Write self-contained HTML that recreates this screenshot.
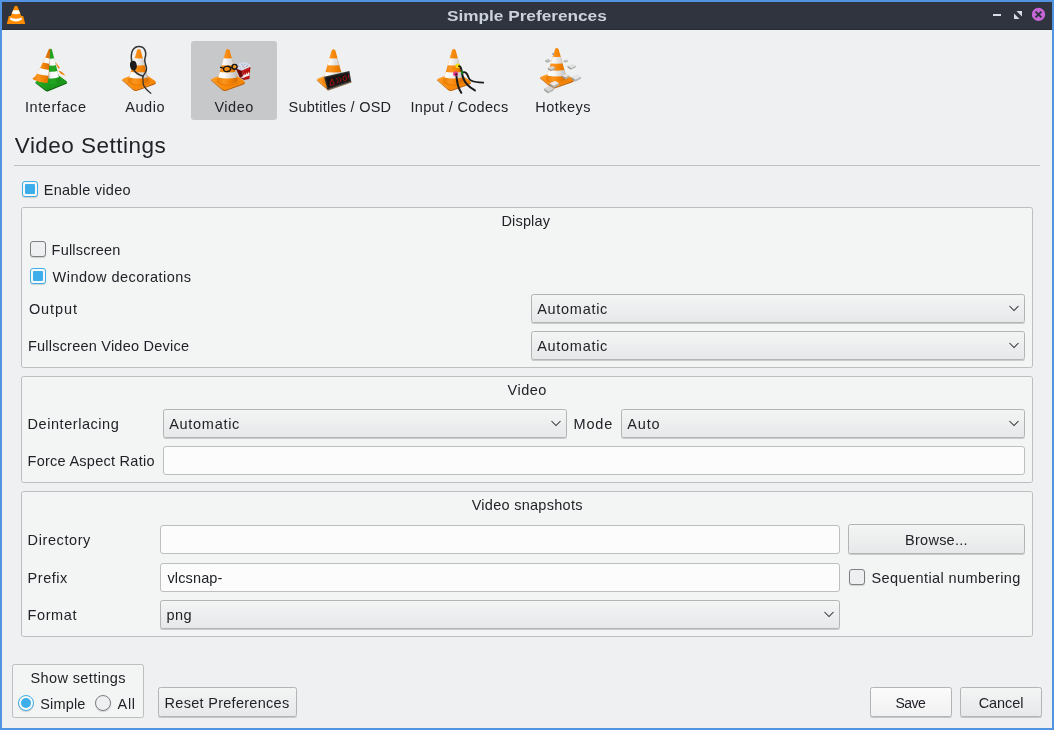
<!DOCTYPE html>
<html>
<head>
<meta charset="utf-8">
<title>Simple Preferences</title>
<style>
html,body{margin:0;padding:0;}
body{width:1054px;height:730px;background:#5294e2;position:relative;overflow:hidden;font-family:"Liberation Sans",sans-serif;}
.abs{position:absolute;box-sizing:border-box;}
#titlebar{left:2px;top:2px;width:1050px;height:28px;background:#2f343f;border-bottom:1px solid #272b34;}
#content{left:2px;top:30px;width:1050px;height:698px;background:#eff0f1;}
.t{position:absolute;white-space:nowrap;line-height:1;}
#title{will-change:transform;position:absolute;left:446.5px;top:9px;font-size:14px;font-weight:700;color:#ccd2dc;white-space:nowrap;line-height:1;transform-origin:0 0;transform:scaleX(1.229);}
.sel{left:191px;top:41px;width:86px;height:79px;background:#c7c8c9;border-radius:3px;}
.hr{left:14px;top:165px;width:1026px;height:1px;background:#bfc1c3;}
.grp{border:1px solid #bcbebf;border-radius:2.5px;background:#f3f4f4;}
.combo,.btn{border:1px solid #b2b4b6;border-radius:2.5px;background:linear-gradient(#f3f4f4,#e7e8e9);box-shadow:0 1px 0.5px rgba(0,0,0,0.17);}
.btn.def{background:linear-gradient(#fbfbfb,#f1f1f2);}
.edit{border:1px solid #bcbebf;border-radius:3px;background:#fcfcfc;}
.cb{width:16px;height:16px;border:1px solid #7e8082;border-radius:3px;background:#eeeff0;box-shadow:0 1px 1px rgba(0,0,0,0.15);}
.cb.on{border-color:#3daee9;background:#f6f7f7;}
.cb.on::after{content:"";position:absolute;left:2px;top:2px;width:10px;height:10px;background:#3daee9;border-radius:1px;}
.rb{width:16px;height:16px;border:1px solid #7e8082;border-radius:50%;background:#eeeff0;box-shadow:0 1px 1px rgba(0,0,0,0.15);}
.rb.on{border-color:#3daee9;background:#f6f7f7;}
.rb.on::after{content:"";position:absolute;left:2px;top:2px;width:10px;height:10px;background:#3daee9;border-radius:50%;}
svg{position:absolute;overflow:visible;}
</style>
</head>
<body>
<div id="titlebar" class="abs"></div>
<div id="content" class="abs"></div>
<span id="title">Simple Preferences</span>

<!-- window controls + app icon -->
<svg id="wc" style="left:0;top:0" width="1054" height="32" viewBox="0 0 1054 32">
  <!-- app icon -->
  <g>
    <path d="M14.6,6.3 Q16,5.3 17.4,6.3 L21.3,16 L23.2,16 L25.2,24 L6.8,24 L8.8,16 L10.7,16 Z" fill="#ff8c00"/>
    <path d="M13.2,10.3 L18.8,10.3 L20.2,13.6 Q16,14.8 11.8,13.6 Z" fill="#ffffff"/>
    <path d="M10.5,17.5 Q16,20.2 21.5,17.5 L22.1,19.4 Q16,23.6 9.9,19.4 Z" fill="#ffffff"/>
  </g>
  <rect x="993" y="14" width="8" height="2" fill="#d8dee8"/>
  <path d="M1016.5,11 L1022,11 L1022,16.5 Z M1014,13.5 L1019.5,19 L1014,19 Z" fill="#d8dee8"/>
  <circle cx="1038.5" cy="14.4" r="6.65" fill="#c565d8"/>
  <path d="M1035.6,11.6 L1041.4,17.4 M1041.4,11.6 L1035.6,17.4" stroke="#2f343f" stroke-width="2" fill="none"/>
</svg>

<div class="abs sel"></div>
<svg id="icons" style="left:0;top:40px" width="1054" height="60" viewBox="0 0 1054 60">
<defs>
  <linearGradient id="og" x1="0" x2="1" y1="0" y2="0">
    <stop offset="0" stop-color="#ea7e06"/><stop offset="0.32" stop-color="#fc9520"/><stop offset="0.65" stop-color="#f18100"/><stop offset="1" stop-color="#d36900"/>
  </linearGradient>
  <linearGradient id="wg" gradientUnits="userSpaceOnUse" x1="8" x2="28" y1="0" y2="0"><stop offset="0" stop-color="#ffffff"/><stop offset="0.38" stop-color="#f7f7f7"/><stop offset="0.6" stop-color="#e2e2e2"/><stop offset="0.85" stop-color="#cacaca"/><stop offset="1" stop-color="#bebebe"/></linearGradient>
  <linearGradient id="bg" x1="0" x2="1" y1="0" y2="1">
    <stop offset="0" stop-color="#ffa02c"/><stop offset="0.6" stop-color="#fb8c0a"/><stop offset="1" stop-color="#ec7a00"/>
  </linearGradient>
  <linearGradient id="gg" x1="0" x2="1" y1="0" y2="0">
    <stop offset="0" stop-color="#1f9a1f"/><stop offset="0.5" stop-color="#22a822"/><stop offset="1" stop-color="#128212"/>
  </linearGradient>
  <linearGradient id="wg2" x1="0" x2="1" y1="0" y2="0"><stop offset="0.1" stop-color="#a8a8a8"/><stop offset="0.3" stop-color="#f4f4f4"/><stop offset="0.75" stop-color="#ffffff"/><stop offset="1" stop-color="#d8d8d8"/></linearGradient>
  <linearGradient id="gb" x1="0" x2="1" y1="0" y2="1">
    <stop offset="0" stop-color="#2bb12b"/><stop offset="1" stop-color="#128a12"/>
  </linearGradient>
  <clipPath id="cc"><path d="M16.2,11.2 C16.5,8.3 20,8.3 20.4,11.2 L27.9,39 Q28.6,41.5 25,43 Q18.3,45.5 11.5,43 Q7.6,41.5 8.3,39 Z"/></clipPath>
  <g id="cone">
    <path d="M1.4,39.3 L1.7,40.5 L12.8,50.3 Q14.7,51.6 16.8,50.8 L34,44.4 Q35.7,43.7 35.6,42.2 L16.6,49.4 L12.8,49 Z" fill="#c05f02"/>
    <path d="M3.6,38.2 Q0.9,39.1 2.6,40.5 L12.8,49.1 Q14.6,50.5 16.6,49.7 L33.8,43.2 Q36.3,42.2 34.4,40.8 L20.8,31.6 Z" fill="url(#bg)"/>
    <ellipse cx="18.5" cy="40.7" rx="11.2" ry="5.1" fill="#e27604"/><ellipse cx="18.5" cy="40.2" rx="10.7" ry="4.8" fill="#f58a10"/>
    <path d="M16.2,11.2 C16.5,8.3 20,8.3 20.4,11.2 L27.9,39 Q28.6,41.5 25,43 Q18.3,45.5 11.5,43 Q7.6,41.5 8.3,39 Z" fill="url(#og)"/>
    <g clip-path="url(#cc)">
      <path d="M5,17.2 Q18.3,19.6 31,17.2 L31,24.1 Q18.3,26.7 5,24.1 Z" fill="url(#wg)"/>
      <path d="M5,30.8 Q18.3,34.2 31,30.8 L31,36.4 Q18.3,40.8 5,36.4 Z" fill="url(#wg)"/>
    </g>
  </g>
</defs>

<!-- Interface (box_left 31.5) -->
<g transform="translate(31.5,0)">
  <path d="M3.7,42.2 L4,43.3 L14.2,51 Q15.4,51.8 16.8,51.2 L35,43.7 Q35.8,43.2 35.6,42 L15.3,50 Z" fill="#0b640b"/>
  <path d="M5,41 Q3,41.9 4.6,43 L13.9,49.8 Q15.2,50.7 16.8,50 L34.6,42.8 Q36.4,42 34.8,41 L26,34.5 Z" fill="url(#gb)"/>
  <path d="M18.4,9.1 Q19.6,8.4 20.4,9.6 L27.2,36 Q27.6,38.4 29,40.4 Q26.6,43.6 22.2,44.2 Q18.4,44.4 16.2,43.2 L17.8,20 Z" fill="url(#gg)"/>
  <clipPath id="gc"><path d="M18.4,9.1 Q19.6,8.4 20.4,9.6 L27.2,36 Q27.6,38.4 29,40.4 Q26.6,43.6 22.2,44.2 Q18.4,44.4 16.2,43.2 L17.8,20 Z"/></clipPath>
  <g clip-path="url(#gc)">
    <path d="M16,18.2 Q20,19.4 24,17.8 L26,24.4 Q21,26.6 16,25 Z" fill="url(#wg2)"/>
    <path d="M15,31 Q21,32.8 27.5,30.4 L29,36.4 Q22,39.8 15,37.8 Z" fill="url(#wg2)"/>
  </g>
  <path d="M23.9,21.9 L28.4,27.8 L27.2,29 L25.2,25.4 Z" fill="#f08408"/>
  <path d="M26.6,29 L28.6,28.2 L30,31.6 L27.6,30.6 Z" fill="#f2f2f2"/>
  <path d="M26.6,30.4 L30.2,31.8 L34.2,35.8 L29.6,33.9 Z" fill="#f08408"/>
  <clipPath id="pc"><path d="M17,9.8 Q17.8,8.5 18.7,8.9 L17.9,23 L16.5,41.4 Q16.2,43.2 14.8,43.1 Q7.7,42.4 1.6,39.4 Q0.7,38.8 1.6,38.1 Q3.8,36.4 5,34.4 Q13.4,20 17,9.8 Z"/></clipPath>
  <path d="M17,9.8 Q17.8,8.5 18.7,8.9 L17.9,23 L16.5,41.4 Q16.2,43.2 14.8,43.1 Q7.7,42.4 1.6,39.4 Q0.7,38.8 1.6,38.1 Q3.8,36.4 5,34.4 Q13.4,20 17,9.8 Z" fill="url(#og)"/>
  <g clip-path="url(#pc)">
    <path d="M10,16.6 Q15,17.8 19,18.7 L19,24 Q14,23.6 8,21.6 Z" fill="#f7f7f7"/>
    <path d="M4,26.4 Q10,28.8 19,30.2 L19,36.1 Q10,35.6 1,32.6 Z" fill="#f7f7f7"/>
  </g>
</g>

<!-- Audio (box_left 120.5) -->
<g transform="translate(120.5,0)">
  <use href="#cone"/>
  <g fill="none" stroke="#333333" stroke-width="1.5" stroke-linecap="round">
    <path d="M11.3,22 C9.4,12 13,6.4 18.6,6.5 C24.2,6.6 26.6,12 24.4,18.4 C23.4,21.6 25.6,24.6 26,28.6 C26.4,32.8 22.8,34 22.3,37"/>
    <path d="M13.4,30.2 Q16.4,34.4 22.2,35.9"/>
    <path d="M22.3,36 L22.7,44 Q23.6,48 30.3,53.3" stroke-width="1.2"/>
  </g>
  <ellipse cx="12.9" cy="25.5" rx="3.4" ry="4.7" fill="#1c1c1c" transform="rotate(-8 12.9 25.5)"/>
</g>

<!-- Video (box_left 209.5) -->
<g transform="translate(209.5,0)">
  <use href="#cone"/>
  <!-- popcorn -->
  <path d="M26.6,28.2 Q26.6,25 29,24.6 Q29.6,22.4 32,23 Q33.4,21.6 35.2,22.6 Q37.2,21.8 38.4,23.4 Q40.8,23.4 40.9,26.4 L40.6,28 L32.4,31.6 L26.8,29.4 Z" fill="#d6dcea"/>
  <path d="M29,25.4 L30.2,26.6 M32.2,23.8 L33,25.4 M35.6,23.6 L35,25.2 M38.4,24.6 L37.6,26.2 M30.8,28 L31.8,28.8 M34.4,27 L35.2,28" stroke="#8d9cc0" stroke-width="0.8"/>
  <circle cx="33.6" cy="26.4" r="0.6" fill="#c89a5a"/><circle cx="37" cy="26.6" r="0.5" fill="#b98a52"/><circle cx="28.4" cy="26.8" r="0.5" fill="#9a4a4a"/>
  <path d="M26.3,28.5 L32.3,30.7 L34.6,40.1 L30.2,37.3 Z" fill="#6c0808"/>
  <path d="M32.3,30.7 L40.9,26.9 L39.9,39.1 L34.6,40.1 Z" fill="#b51212"/>
  <path d="M32.3,30.7 L40.9,26.9 L40.8,28.3 L32.6,32 Z" fill="#c92020"/>
  <path d="M31,37.2 L33.2,36.4 L33.6,34.4 L34.6,35.8 L35.2,33.2 L36.4,35 L37.2,32.2 L38.2,34.2 L39.2,31.6 L40.1,33.4 L40,35.4 L33.4,38 Z" fill="#f6eaea"/>
  <!-- glasses -->
  <g fill="none" stroke="#161616" stroke-width="1.35">
    <ellipse cx="17.6" cy="28.9" rx="3.5" ry="2.6" transform="rotate(-10 17.6 28.9)"/>
    <ellipse cx="25.1" cy="26.8" rx="2.5" ry="2.4" fill="#f29a2c"/>
    <path d="M10.6,27.2 L14.2,28.4 M21,27.8 L22.8,27.2"/>
  </g>
</g>

<!-- Subtitles (box_left 315.5) -->
<g transform="translate(315.2,0.1)">
  <use href="#cone"/>
  <path d="M11.6,48.4 L12.4,53 L38,53 L38,40.6 Z" fill="#eff0f1"/><path d="M11.9,49.4 L12.6,50.6 L36.4,42.4 L36.2,41 Z" fill="#6b4a22" opacity="0.75"/>
  <path d="M8.9,36.6 L34.2,30.8 L36,41.4 L12.1,49.6 Z" fill="#2e2e2e"/>
  <path d="M10.6,37.8 L33.2,32.6 L34.5,40.5 L13.1,47.6 Z" fill="#141414"/>
  <g fill="none" stroke="#b01212" stroke-width="0.9">
    <path d="M16.6,38.6 L14.8,45.4 L19.2,44 Z"/>
    <path d="M20.6,37.6 L23.2,40.4 L21.6,43.2 M23.4,37 L26,39.6 L24.4,42.4"/>
    <ellipse cx="29.6" cy="38.2" rx="1.7" ry="2.5"/>
    <path d="M33.2,34.4 L33.6,38 M33.9,39.4 L34,40"/>
  </g>
</g>

<!-- Input (box_left 435.5) -->
<g transform="translate(435.5,0)">
  <use href="#cone"/>
  <g fill="none" stroke="#1b1b1b" stroke-linecap="round">
    <path d="M24.2,26.4 C26.6,28 26,33 27.6,37.6 C29,42 31.6,46 39.4,50.4" stroke-width="2"/>
    <path d="M20.6,34.6 C21.6,38 21.2,42 22.8,46.4 C23.6,49 24.6,51 25.8,52.8" stroke-width="2"/>
    <path d="M27.6,32.4 C30,31.6 31.6,33.4 32.6,36.4 C33.6,40 36,42.4 47.8,42.6" stroke-width="1.8"/>
  </g>
  <path d="M25.2,30.2 L27.8,31 L27.4,34.4 L25.8,34.4 Z" fill="#157a15"/>
  <circle cx="22.2" cy="25.8" r="2.4" fill="#f2dc0c"/>
  <circle cx="23.6" cy="26.2" r="1" fill="#1b1b1b"/>
  <circle cx="20.1" cy="33.7" r="2.5" fill="#ea3a8e"/>
  <circle cx="20.7" cy="34.4" r="1.1" fill="#1b1b1b"/>
</g>

<!-- Hotkeys (box_left 538.5) -->
<g transform="translate(538.5,-1)">
  <use href="#cone" transform="translate(0,0.32) scale(1,0.965)"/>
  <g>
<path d="M6.7,21.2 L8.8,22.7 L8.8,23.8 L6.7,22.3 Z" fill="#8a8a8a"/>
<path d="M8.8,22.7 L11.7,21.1 L11.7,22.3 L8.8,23.8 Z" fill="#9a9a9a"/>
<path d="M6.7,21.2 L9.6,20.0 L11.7,21.1 L8.8,22.7 Z" fill="#bdbdbd"/>
<path d="M25.1,21.5 L27.0,22.6 L27.0,23.5 L25.1,22.4 Z" fill="#8e8e8e"/>
<path d="M27.0,22.6 L29.7,21.4 L29.7,22.3 L27.0,23.5 Z" fill="#a0a0a0"/>
<path d="M25.1,21.5 L27.8,20.6 L29.7,21.4 L27.0,22.6 Z" fill="#c4c4c4"/>
<path d="M29.0,26.6 L32.5,28.9 L32.5,30.8 L29.0,28.5 Z" fill="#9a9a9a"/>
<path d="M32.5,28.9 L37.4,26.5 L37.4,28.3 L32.5,30.8 Z" fill="#b4b4b4"/>
<path d="M29.0,26.6 L33.9,24.8 L37.4,26.5 L32.5,28.9 Z" fill="#e2e2e2"/>
<path d="M9.4,28.7 L12.5,30.7 L12.5,32.3 L9.4,30.3 Z" fill="#8c8c8c"/>
<path d="M12.5,30.7 L16.7,28.6 L16.7,30.2 L12.5,32.3 Z" fill="#a8a8a8"/>
<path d="M9.4,28.7 L13.6,27.1 L16.7,28.6 L12.5,30.7 Z" fill="#d6d6d6"/>
<path d="M23.6,36.4 L26.8,38.6 L26.8,40.4 L23.6,38.2 Z" fill="#969696"/>
<path d="M26.8,38.6 L31.3,36.3 L31.3,38.1 L26.8,40.4 Z" fill="#b2b2b2"/>
<path d="M23.6,36.4 L28.1,34.7 L31.3,36.3 L26.8,38.6 Z" fill="#e4e4e4"/>
<path d="M32.8,37.7 L36.8,40.5 L36.8,42.7 L32.8,39.9 Z" fill="#9c9c9c"/>
<path d="M36.8,40.5 L42.4,37.5 L42.4,39.7 L36.8,42.7 Z" fill="#b8b8b8"/>
<path d="M32.8,37.7 L38.4,35.5 L42.4,37.5 L36.8,40.5 Z" fill="#e6e6e6"/>
<path d="M11.0,44.2 L15.0,47.0 L15.0,49.2 L11.0,46.4 Z" fill="#949494"/>
<path d="M15.0,47.0 L20.5,44.0 L20.5,46.2 L15.0,49.2 Z" fill="#b0b0b0"/>
<path d="M11.0,44.2 L16.5,42.0 L20.5,44.0 L15.0,47.0 Z" fill="#eaeaea"/>
<path d="M5.6,49.3 L9.6,52.2 L9.6,54.5 L5.6,51.6 Z" fill="#a2a2a2"/>
<path d="M9.6,52.2 L15.2,49.2 L15.2,51.5 L9.6,54.5 Z" fill="#b6b6b6"/>
<path d="M5.6,49.3 L11.2,47.0 L15.2,49.2 L9.6,52.2 Z" fill="#d4d4d4"/>
<path d="M13.3,14.6 L15.2,13.7 L15.7,15.4 L13.9,16.1 Z" fill="#8ea2c0"/>
</g>
</g>
</svg>


<div class="abs hr"></div>

<!-- Enable video -->
<div class="abs cb on" style="left:22px;top:181px"></div>

<!-- Display group -->
<div class="abs grp" style="left:21px;top:207px;width:1012px;height:161px"></div>
<div class="abs cb" style="left:30px;top:241px"></div>
<div class="abs cb on" style="left:30px;top:268px"></div>
<div class="abs combo" style="left:531px;top:294px;width:494px;height:29px"></div>
<div class="abs combo" style="left:531px;top:331px;width:494px;height:29px"></div>

<!-- Video group -->
<div class="abs grp" style="left:21px;top:376px;width:1012px;height:107px"></div>
<div class="abs combo" style="left:163px;top:409px;width:404px;height:29px"></div>
<div class="abs combo" style="left:621px;top:409px;width:404px;height:29px"></div>
<div class="abs edit" style="left:163px;top:446px;width:862px;height:29px"></div>

<!-- Snapshots group -->
<div class="abs grp" style="left:21px;top:491px;width:1012px;height:146px"></div>
<div class="abs edit" style="left:160px;top:525px;width:680px;height:29px"></div>
<div class="abs btn" style="left:848px;top:524px;width:177px;height:30px"></div>
<div class="abs edit" style="left:160px;top:563px;width:680px;height:29px"></div>
<div class="abs cb" style="left:849px;top:569px"></div>
<div class="abs combo" style="left:160px;top:600px;width:680px;height:29px"></div>

<!-- bottom -->
<div class="abs grp" style="left:12px;top:664px;width:132px;height:54px"></div>
<div class="abs rb on" style="left:18px;top:695px"></div>
<div class="abs rb" style="left:95px;top:695px"></div>
<div class="abs btn" style="left:158px;top:687px;width:139px;height:30px"></div>
<div class="abs btn def" style="left:870px;top:687px;width:82px;height:30px"></div>
<div class="abs btn" style="left:960px;top:687px;width:82px;height:30px"></div>

<!-- chevrons -->
<svg style="left:0;top:0" width="1054" height="730" viewBox="0 0 1054 730" fill="none" stroke="#30343a" stroke-width="1.05">
  <path d="M1009.5,306 L1014,310.5 L1018.5,306"/>
  <path d="M1009.5,343 L1014,347.5 L1018.5,343"/>
  <path d="M551.5,421 L556,425.5 L560.5,421"/>
  <path d="M1009.5,421 L1014,425.5 L1018.5,421"/>
  <path d="M824.5,612 L829,616.5 L833.5,612"/>
</svg>

<div id="texts" style="position:absolute;left:0;top:0;width:1054px;height:730px;will-change:transform">
<span class="t" style="left:24.90px;top:99.73px;font-size:14.5px;font-weight:400;color:#202428;letter-spacing:0.580px">Interface</span>
<span class="t" style="left:125.20px;top:99.73px;font-size:14.5px;font-weight:400;color:#202428;letter-spacing:0.570px">Audio</span>
<span class="t" style="left:214.40px;top:99.73px;font-size:14.5px;font-weight:400;color:#202428;letter-spacing:0.535px">Video</span>
<span class="t" style="left:288.50px;top:99.73px;font-size:14.5px;font-weight:400;color:#202428;letter-spacing:0.246px">Subtitles / OSD</span>
<span class="t" style="left:410.50px;top:99.73px;font-size:14.5px;font-weight:400;color:#202428;letter-spacing:0.319px">Input / Codecs</span>
<span class="t" style="left:535.20px;top:99.73px;font-size:14.5px;font-weight:400;color:#202428;letter-spacing:0.495px">Hotkeys</span>
<span class="t" style="left:14.80px;top:134.95px;font-size:22.5px;font-weight:400;color:#202428;letter-spacing:0.482px">Video Settings</span>
<span class="t" style="left:43.70px;top:182.73px;font-size:14.5px;font-weight:400;color:#202428;letter-spacing:0.275px">Enable video</span>
<span class="t" style="left:501.50px;top:213.73px;font-size:14.5px;font-weight:400;color:#202428;letter-spacing:0.151px">Display</span>
<span class="t" style="left:51.60px;top:242.73px;font-size:14.5px;font-weight:400;color:#202428;letter-spacing:0.198px">Fullscreen</span>
<span class="t" style="left:52.60px;top:269.73px;font-size:14.5px;font-weight:400;color:#202428;letter-spacing:0.464px">Window decorations</span>
<span class="t" style="left:28.90px;top:301.73px;font-size:14.5px;font-weight:400;color:#202428;letter-spacing:0.900px">Output</span>
<span class="t" style="left:537.20px;top:301.73px;font-size:14.5px;font-weight:400;color:#202428;letter-spacing:0.710px">Automatic</span>
<span class="t" style="left:27.90px;top:338.73px;font-size:14.5px;font-weight:400;color:#202428;letter-spacing:0.226px">Fullscreen Video Device</span>
<span class="t" style="left:537.20px;top:338.73px;font-size:14.5px;font-weight:400;color:#202428;letter-spacing:0.710px">Automatic</span>
<span class="t" style="left:507.50px;top:382.73px;font-size:14.5px;font-weight:400;color:#202428;letter-spacing:0.510px">Video</span>
<span class="t" style="left:27.60px;top:416.73px;font-size:14.5px;font-weight:400;color:#202428;letter-spacing:0.545px">Deinterlacing</span>
<span class="t" style="left:169.20px;top:416.73px;font-size:14.5px;font-weight:400;color:#202428;letter-spacing:0.710px">Automatic</span>
<span class="t" style="left:573.60px;top:416.73px;font-size:14.5px;font-weight:400;color:#202428;letter-spacing:0.798px">Mode</span>
<span class="t" style="left:627.30px;top:416.73px;font-size:14.5px;font-weight:400;color:#202428;letter-spacing:0.812px">Auto</span>
<span class="t" style="left:27.60px;top:453.73px;font-size:14.5px;font-weight:400;color:#202428;letter-spacing:0.257px">Force Aspect Ratio</span>
<span class="t" style="left:471.70px;top:497.73px;font-size:14.5px;font-weight:400;color:#202428;letter-spacing:0.271px">Video snapshots</span>
<span class="t" style="left:27.60px;top:532.73px;font-size:14.5px;font-weight:400;color:#202428;letter-spacing:0.593px">Directory</span>
<span class="t" style="left:905.10px;top:532.73px;font-size:14.5px;font-weight:400;color:#202428;letter-spacing:0.249px">Browse...</span>
<span class="t" style="left:27.60px;top:570.73px;font-size:14.5px;font-weight:400;color:#202428;letter-spacing:0.537px">Prefix</span>
<span class="t" style="left:167.50px;top:570.73px;font-size:14.5px;font-weight:400;color:#202428;letter-spacing:0.119px">vlcsnap-</span>
<span class="t" style="left:871.50px;top:570.73px;font-size:14.5px;font-weight:400;color:#202428;letter-spacing:0.410px">Sequential numbering</span>
<span class="t" style="left:27.60px;top:607.73px;font-size:14.5px;font-weight:400;color:#202428;letter-spacing:0.581px">Format</span>
<span class="t" style="left:166.60px;top:607.73px;font-size:14.5px;font-weight:400;color:#202428;letter-spacing:0.386px">png</span>
<span class="t" style="left:30.40px;top:670.73px;font-size:14.5px;font-weight:400;color:#202428;letter-spacing:0.398px">Show settings</span>
<span class="t" style="left:40.20px;top:696.73px;font-size:14.5px;font-weight:400;color:#202428;letter-spacing:0.169px">Simple</span>
<span class="t" style="left:117.60px;top:696.73px;font-size:14.5px;font-weight:400;color:#202428;letter-spacing:0.654px">All</span>
<span class="t" style="left:164.60px;top:695.73px;font-size:14.5px;font-weight:400;color:#202428;letter-spacing:0.279px">Reset Preferences</span>
<span class="t" style="left:895.60px;top:696.15px;font-size:14.0px;font-weight:400;color:#202428;letter-spacing:-0.608px">Save</span>
<span class="t" style="left:978.70px;top:695.73px;font-size:14.5px;font-weight:400;color:#202428;letter-spacing:-0.063px">Cancel</span>
</div>
</body>
</html>
